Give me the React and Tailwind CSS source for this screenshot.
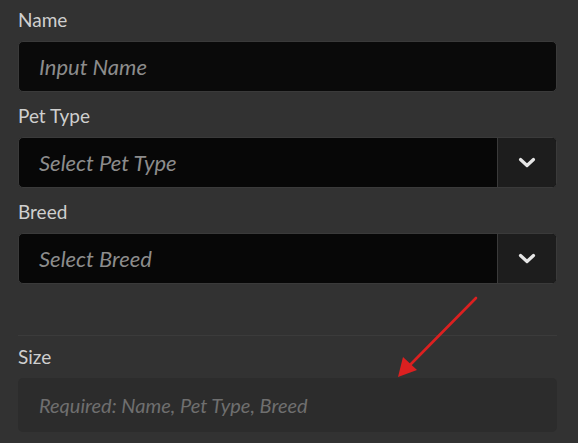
import React from "react";

function Chevron() {
  return (
    <svg width="18" height="11" viewBox="0 0 18 11" fill="none">
      <path d="M2.5 2.5 L9 8.5 L15.5 2.5" stroke="#e6e6e6" strokeWidth="3.2" strokeLinecap="round" strokeLinejoin="round" />
    </svg>
  );
}

function Label({ children }) {
  return (
    <div className="h-[22px] leading-[22px] text-[19px] text-[#cfcfcf] mb-[10px]">{children}</div>
  );
}

function TextField({ placeholder }) {
  return (
    <div className="h-[51px] rounded-[5px] border border-[#3a3a3a] bg-[#0a0a0a] flex items-center pl-[20px]">
      <span className="italic text-[22px] text-[#8c8c8c]">{placeholder}</span>
    </div>
  );
}

function SelectField({ placeholder }) {
  return (
    <div className="h-[51px] rounded-[5px] border border-[#3a3a3a] bg-[#070707] flex overflow-hidden">
      <div className="flex-1 flex items-center pl-[20px]">
        <span className="italic text-[22px] text-[#8c8c8c]">{placeholder}</span>
      </div>
      <div className="w-[59px] border-l border-[#3a3a3a] bg-[#1d1d1d] flex items-center justify-center">
        <Chevron />
      </div>
    </div>
  );
}

export default function App() {
  return (
    <div
      className="relative w-[578px] h-[443px] bg-[#323232] overflow-hidden"
      style={{ fontFamily: "Lato, 'Open Sans', sans-serif" }}
    >
      <div className="pl-[18px] w-[557px] pt-[9px]">
        <Label>Name</Label>
        <TextField placeholder="Input Name" />
        <div className="h-[13px]" />
        <Label>Pet Type</Label>
        <SelectField placeholder="Select Pet Type" />
        <div className="h-[13px]" />
        <Label>Breed</Label>
        <SelectField placeholder="Select Breed" />
        <div className="h-[51px]" />
        <div className="h-px bg-[#3b3b3b]" />
        <div className="h-[10px]" />
        <Label>Size</Label>
        <div className="h-[54px] rounded-[5px] bg-[#2c2c2c] flex items-center pl-[21px]">
          <span className="italic text-[20px] text-[#6f6f6f]">Required: Name, Pet Type, Breed</span>
        </div>
      </div>
      <svg className="absolute left-0 top-0" width="578" height="443" viewBox="0 0 578 443">
        <line x1="476" y1="298" x2="410" y2="365" stroke="#dc2020" strokeWidth="2.6" strokeLinecap="round" />
        <polygon points="398,377 403,357 417,370" fill="#dc2020" />
      </svg>
    </div>
  );
}
